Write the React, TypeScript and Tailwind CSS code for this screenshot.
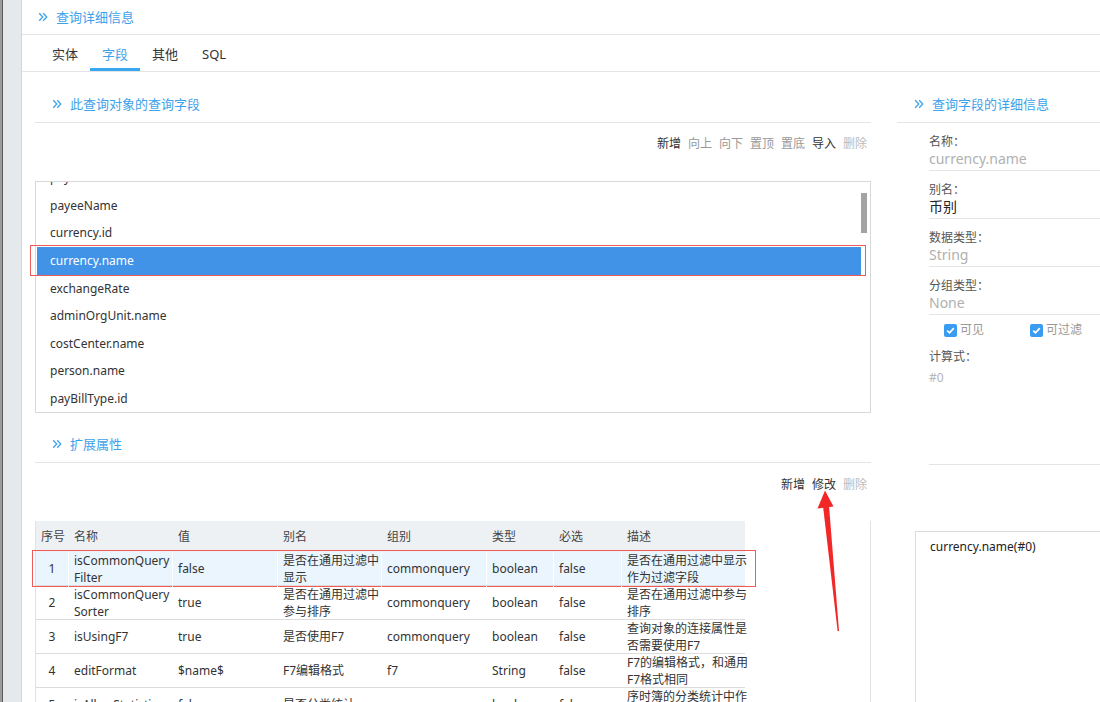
import React from "react";

const FONT = "font-['Noto_Sans','Noto_Sans_CJK_SC',sans-serif]";

function Chev() {
  return (
    <svg width="10" height="10" viewBox="0 0 10 10" className="shrink-0">
      <path d="M1.2 1.2 L4.8 5 L1.2 8.8" fill="none" stroke="#3ea2ea" strokeWidth="1.3" />
      <path d="M5.2 1.2 L8.8 5 L5.2 8.8" fill="none" stroke="#3ea2ea" strokeWidth="1.3" />
    </svg>
  );
}

function SectionTitle({ text }: { text: string }) {
  return (
    <div className="flex items-center gap-[8px]">
      <Chev />
      <span className="text-[13px] leading-[18px] text-[#3ea2ea]">{text}</span>
    </div>
  );
}

function Check() {
  return (
    <span className="w-[13px] h-[13px] rounded-[2px] bg-[#3a9cf0] flex items-center justify-center">
      <svg width="11" height="11" viewBox="0 0 11 11">
        <path d="M2.2 5.6 L4.5 7.8 L8.8 3.2" fill="none" stroke="#fff" strokeWidth="1.7" />
      </svg>
    </span>
  );
}

const listRows = [
  "payeeId",
  "payeeName",
  "currency.id",
  "currency.name",
  "exchangeRate",
  "adminOrgUnit.name",
  "costCenter.name",
  "person.name",
  "payBillType.id",
  "payBillType.name",
];

type Row = { no: string; name: string[]; val: string; alias: string[]; group: string; type: string; req: string; desc: string[] };

const rows: Row[] = [
  { no: "1", name: ["isCommonQuery", "Filter"], val: "false", alias: ["是否在通用过滤中", "显示"], group: "commonquery", type: "boolean", req: "false", desc: ["是否在通用过滤中显示", "作为过滤字段"] },
  { no: "2", name: ["isCommonQuery", "Sorter"], val: "true", alias: ["是否在通用过滤中", "参与排序"], group: "commonquery", type: "boolean", req: "false", desc: ["是否在通用过滤中参与", "排序"] },
  { no: "3", name: ["isUsingF7"], val: "true", alias: ["是否使用F7"], group: "commonquery", type: "boolean", req: "false", desc: ["查询对象的连接属性是", "否需要使用F7"] },
  { no: "4", name: ["editFormat"], val: "$name$", alias: ["F7编辑格式"], group: "f7", type: "String", req: "false", desc: ["F7的编辑格式，和通用", "F7格式相同"] },
  { no: "5", name: ["isAllowStatistic"], val: "false", alias: ["是否分类统计"], group: "commonquery", type: "boolean", req: "false", desc: ["序时簿的分类统计中作", "为统计字段"] },
];

const cols = [
  { key: "no", label: "序号", w: "w-[33px]" },
  { key: "name", label: "名称", w: "w-[104px]" },
  { key: "val", label: "值", w: "w-[105px]" },
  { key: "alias", label: "别名", w: "w-[104px]" },
  { key: "group", label: "组别", w: "w-[105px]" },
  { key: "type", label: "类型", w: "w-[67px]" },
  { key: "req", label: "必选", w: "w-[68px]" },
  { key: "desc", label: "描述", w: "w-[123px]" },
];

function Lines({ v }: { v: string | string[] }) {
  const arr = Array.isArray(v) ? v : [v];
  return (
    <div className="flex flex-col">
      {arr.map((l, i) => (
        <span key={i} className="whitespace-nowrap leading-[17px]">
          {l}
        </span>
      ))}
    </div>
  );
}

function Field({ label, value, dark }: { label: string; value: string; dark?: boolean }) {
  return (
    <div className="border-b border-[#e4e4e4] pt-[10px] pb-[2px]">
      <div className="text-[12px] leading-[17px] text-[#555]">{label}</div>
      <div className={`text-[14px] leading-[18px] ${dark ? "text-[#222]" : "text-[#b0b0b0]"}`}>{value}</div>
    </div>
  );
}

export default function App() {
  return (
    <div className={`relative w-[1100px] h-[702px] overflow-hidden bg-white flex ${FONT}`}>
      {/* left strip */}
      <div className="flex shrink-0">
        <div className="w-[2px] bg-[#9c9c9c]" />
        <div className="w-[1px] bg-[#5e5e5e]" />
        <div className="w-[18px] bg-[#e6e9ec]" />
        <div className="w-[1px] bg-[#d2d6d9]" />
      </div>

      <div className="flex-1 flex flex-col min-w-0">
        {/* top header */}
        <div className="h-[35px] shrink-0 border-b border-[#e4e4e4] flex items-center pl-[16px]">
          <SectionTitle text="查询详细信息" />
        </div>
        {/* tabs */}
        <div className="h-[37px] shrink-0 border-b border-[#e4e4e4] flex pl-[18px]">
          {["实体", "字段", "其他", "SQL"].map((t, i) => (
            <div
              key={t}
              className={`w-[50px] px-[12px] flex items-center text-[13px] ${
                i === 1 ? "text-[#3ea2ea] border-b-[3px] border-[#3aa8f0] pt-[7px]" : "text-[#333] pt-[4px]"
              }`}
            >
              <span>{t}</span>
            </div>
          ))}
        </div>

        <div className="flex flex-1 pl-[13px] min-h-0">
          {/* left column */}
          <div className="w-[836px] shrink-0 flex flex-col">
            <div className="h-[51px] pt-[14px] border-b border-[#e4e4e4] flex items-center pl-[17px] shrink-0">
              <SectionTitle text="此查询对象的查询字段" />
            </div>
            <div className="h-[42px] shrink-0 flex items-center justify-end gap-[7px] pr-[4px] text-[12px]">
              <span className="text-[#333]">新增</span>
              <span className="text-[#999]">向上</span>
              <span className="text-[#999]">向下</span>
              <span className="text-[#999]">置顶</span>
              <span className="text-[#999]">置底</span>
              <span className="text-[#333]">导入</span>
              <span className="text-[#bbb]">删除</span>
            </div>
            <div className="mt-[16px] h-[232px] shrink-0 relative">
              <div className="h-full border border-[#d8d8d8] relative overflow-hidden">
                <div className="mt-[-17.5px] flex flex-col">
                  {listRows.map((r) => {
                    const sel = r === "currency.name";
                    return (
                      <div key={r} className="h-[27.6px] relative pr-[9px] pl-[1px]">
                        <div
                          className={`h-full flex items-center pl-[13px] text-[12px] ${
                            sel ? "bg-[#4193e8] text-white" : "text-[#333]"
                          }`}
                        >
                          {r}
                        </div>
                      </div>
                    );
                  })}
                </div>
                <div className="absolute right-[3px] top-[11px] w-[6px] h-[40px] bg-[#a3a3a3]" />
              </div>
              <div className="absolute left-[-5px] right-[5px] top-[64px] h-[31px] border border-[#ef5a5a] pointer-events-none" />
            </div>

            <div className="h-[50px] pt-[12px] border-b border-[#e4e4e4] flex items-center pl-[17px] shrink-0">
              <SectionTitle text="扩展属性" />
            </div>
            <div className="h-[44px] shrink-0 flex items-center justify-end gap-[7px] pr-[4px] text-[12px]">
              <span className="text-[#333]">新增</span>
              <span className="text-[#333]">修改</span>
              <span className="text-[#bbb]">删除</span>
            </div>
            <div className="mt-[14px] flex-1 border-l border-r border-[#e2e2e2]">
              <div className="w-[709px] text-[12px] text-[#333]">
                <div className="h-[31px] flex bg-[#eef1f4]">
                  {cols.map((c) => (
                    <div key={c.key} className={`${c.w} flex items-center pl-[5px] text-[#444]`}>
                      {c.label}
                    </div>
                  ))}
                </div>
                {rows.map((r, ri) => {
                  const sel = ri === 0;
                  return (
                    <div key={r.no} className={`h-[34px] flex border-b border-[#dcdcdc] relative ${sel ? "bg-[#eaf5fe]" : ""}`}>
                      {sel && (
                        <div className="absolute left-[-4px] right-[-11px] top-[-2px] bottom-[-2px] border border-[#ef5a5a] pointer-events-none" />
                      )}
                      {cols.map((c, ci) => (
                        <div
                          key={c.key}
                          className={`${c.w} flex items-center ${ci === 0 ? "justify-center" : "pl-[5px]"} ${
                            ci < cols.length - 1 ? "border-r border-white" : ""
                          }`}
                        >
                          <Lines v={(r as any)[c.key]} />
                        </div>
                      ))}
                    </div>
                  );
                })}
              </div>
            </div>
          </div>

          {/* right column */}
          <div className="ml-[26px] flex-1 flex flex-col min-w-0">
            <div className="h-[51px] pt-[14px] border-b border-[#e4e4e4] flex items-center pl-[17px] shrink-0">
              <SectionTitle text="查询字段的详细信息" />
            </div>
            <div className="pl-[32px] flex flex-col">
              <Field label="名称：" value="currency.name" />
              <Field label="别名：" value="币别" dark />
              <Field label="数据类型：" value="String" />
              <Field label="分组类型：" value="None" />
              <div className="h-[150px] border-b border-[#e4e4e4]">
                <div className="h-[30px] flex items-center pl-[15px] text-[12px] text-[#999]">
                  <div className="flex items-center gap-[3px] w-[86px]">
                    <Check />
                    <span>可见</span>
                  </div>
                  <div className="flex items-center gap-[3px]">
                    <Check />
                    <span>可过滤</span>
                  </div>
                </div>
                <div className="pt-[3px] text-[12px] leading-[17px] text-[#555]">计算式：</div>
                <div className="mt-[4px] text-[12px] leading-[18px] text-[#b5b5b5]">#0</div>
              </div>
            </div>
            <div className="mt-[66px] ml-[18px] flex-1 border-l border-t border-[#dcdcdc] pl-[14px] pt-[6px]">
              <div className="text-[12px] leading-[18px] text-[#222]">currency.name(#0)</div>
            </div>
          </div>
        </div>
      </div>

      {/* red annotation arrow */}
      <svg className="absolute left-0 top-0 pointer-events-none" width="1100" height="702" viewBox="0 0 1100 702">
        <polygon points="823,506 829,505.5 839,631 837.6,631" fill="#f22828" />
        <polygon points="825,490.5 833.5,506.5 817.5,508.5" fill="#f22828" />
      </svg>
    </div>
  );
}
